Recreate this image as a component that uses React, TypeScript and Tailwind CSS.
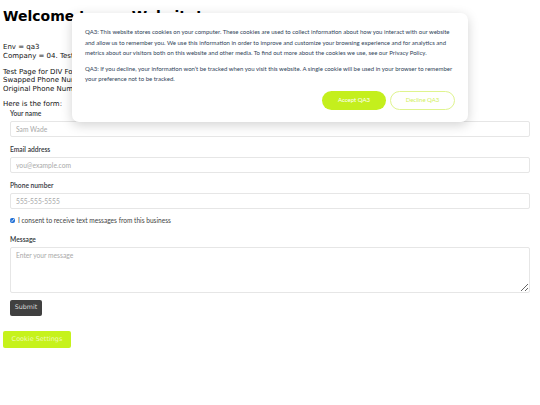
import React from "react";

const Field = ({ label, placeholder }: { label: string; placeholder: string }) => (
  <div className="flex flex-col">
    <label className="text-[6.7px] leading-[8px] font-semibold text-[#33383d] mb-[4px]">{label}</label>
    <input
      placeholder={placeholder}
      className="h-[16px] w-full border border-[#e6e6e6] rounded-[2px] bg-white px-[5px] text-[6.7px] text-[#333] placeholder:text-[#a9a9a9] outline-none mb-[8px]"
    />
  </div>
);

const CookieBanner = () => (
  <div
    className="absolute left-[72px] top-[13px] w-[396px] h-[109px] bg-white rounded-[7px] shadow-[0_3px_12px_rgba(0,0,0,0.18)] px-[13px] pt-[14px]"
    style={{ fontFamily: "Lato, 'Noto Sans', sans-serif" }}
  >
    <p className="text-[6px] leading-[10.5px] text-[#2f4358]">
      QA3: This website stores cookies on your computer. These cookies are used to collect information about how you interact with our website
      and allow us to remember you. We use this information in order to improve and customize your browsing experience and for analytics and
      metrics about our visitors both on this website and other media. To find out more about the cookies we use, see our Privacy Policy.
    </p>
    <p className="text-[6px] leading-[10.5px] text-[#2f4358] mt-[5px]">
      QA3: If you decline, your information won’t be tracked when you visit this website. A single cookie will be used in your browser to remember
      your preference not to be tracked.
    </p>
    <div className="flex justify-end gap-[4px] mt-[6px]">
      <button className="h-[19px] w-[64px] rounded-full bg-[#c4ef1d] text-white text-[6px]">Accept QA3</button>
      <button className="h-[19px] w-[65px] rounded-full border border-[#dff48e] bg-white text-[#d2f05a] text-[6px]">
        Decline QA3
      </button>
    </div>
  </div>
);

export default function App() {
  return (
    <div className="relative w-[540px] h-[405px] bg-white overflow-hidden leading-none">
      <div className="px-[3px]" style={{ fontFamily: "'DejaVu Sans', sans-serif" }}>
        <h1 className="text-[14px] leading-[16px] font-bold text-black pt-[8px]">Welcome to our Website!</h1>
        <div className="text-[7px] leading-[8.5px] text-[#111] mt-[19px]">
          <p className="mb-[0.5px]">Env = qa3</p>
          <p>Company = 04. Test Company</p>
          <p className="mt-[7px]">Test Page for DIV Form</p>
          <p>Swapped Phone Number: 555-555-5555</p>
          <p>Original Phone Number: 555-555-5555</p>
          <p className="mt-[7px]">Here is the form:</p>
        </div>
      </div>

      <form
        className="flex flex-col pl-[10px] pr-[10px] leading-none"
        style={{ fontFamily: "Lato, 'Noto Sans', sans-serif" }}
        onSubmit={(e) => e.preventDefault()}
      >
        <Field label="Your name" placeholder="Sam Wade" />
        <Field label="Email address" placeholder="you@example.com" />
        <Field label="Phone number" placeholder="555-555-5555" />
        <div className="flex items-center gap-[3px] h-[8px]">
          <input type="checkbox" defaultChecked className="w-[5px] h-[5px] m-0 accent-[#1f6fd6]" />
          <span className="text-[6.6px] text-[#444]">I consent to receive text messages from this business</span>
        </div>
        <label className="text-[6.7px] leading-[8px] font-semibold text-[#33383d] mt-[10px] mb-[4px]">Message</label>
        <textarea
          placeholder="Enter your message"
          className="h-[46px] w-full border border-[#e6e6e6] rounded-[2px] px-[5px] py-[4px] text-[6.7px] placeholder:text-[#a9a9a9] outline-none resize-y"
        />
        <div className="mt-[7px] flex">
          <button
            className="h-[16px] w-[32px] rounded-[2px] bg-[#404040] text-[#dcdcdc] text-[6.3px]"
            style={{ fontFamily: "'DejaVu Sans', sans-serif" }}
          >
            Submit
          </button>
        </div>
      </form>

      <div className="px-[3px] mt-[15px] flex" style={{ fontFamily: "'DejaVu Sans', sans-serif" }}>
        <button className="h-[17px] w-[68px] rounded-[2px] bg-[#c6f21c] text-[#eefbb5] text-[6.5px]">Cookie Settings</button>
      </div>

      <CookieBanner />
    </div>
  );
}
